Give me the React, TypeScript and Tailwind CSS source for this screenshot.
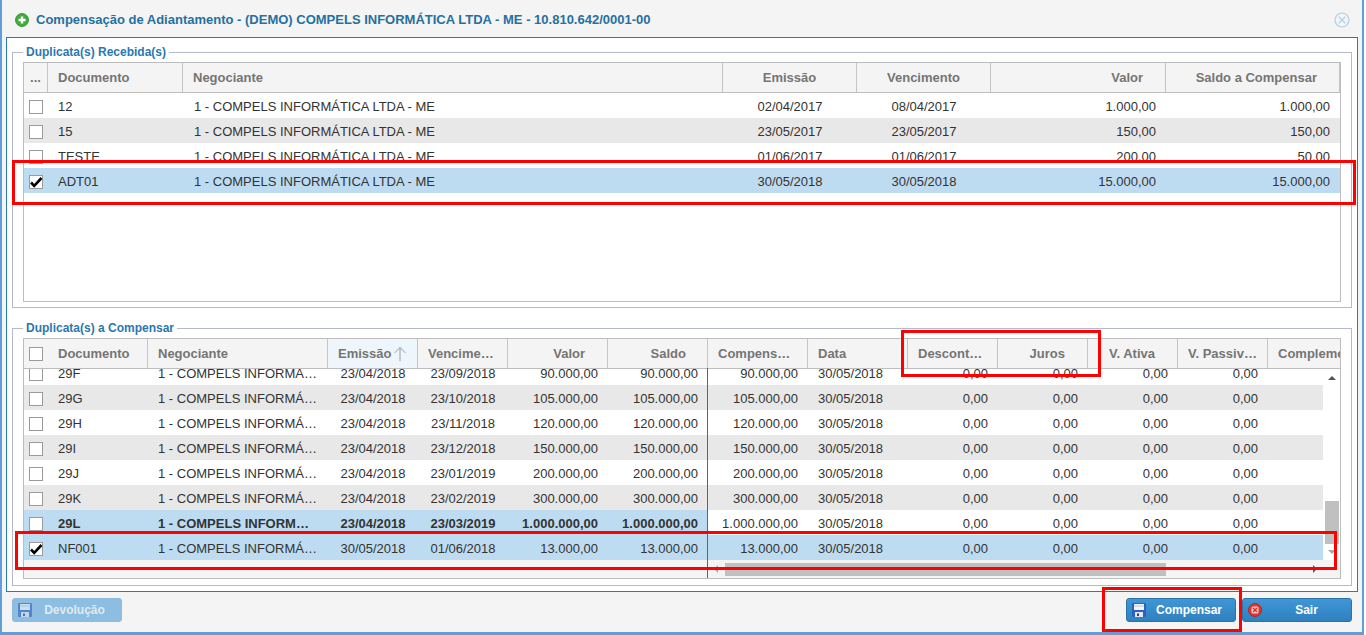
const F = "font-['Liberation_Sans',Arial,sans-serif]";

function Check({ on = false }: { on?: boolean }) {
  return (
    <span className="relative block h-[14px] w-[14px] shrink-0 border border-[#9a9a9a] bg-white">
      {on && (
        <svg viewBox="0 0 14 14" className="absolute -left-px -top-px h-[14px] w-[14px]">
          <path d="M2 7.5 L5.2 10.8 L12.5 3" fill="none" stroke="#000" strokeWidth="2.6" />
        </svg>
      )}
    </span>
  );
}

type Col = { w: string; label: string; head: string; cell: string };

const topCols: Col[] = [
  { w: "w-[135px]", label: "Documento", head: "justify-start pl-[10px]", cell: "justify-start pl-[10px]" },
  { w: "w-[540px]", label: "Negociante", head: "justify-start pl-[10px]", cell: "justify-start pl-[11px]" },
  { w: "w-[134px]", label: "Emissão", head: "justify-center", cell: "justify-center" },
  { w: "w-[134px]", label: "Vencimento", head: "justify-center", cell: "justify-center" },
  { w: "w-[175px]", label: "Valor", head: "justify-end pr-[22px]", cell: "justify-end pr-[10px]" },
  { w: "w-[174px]", label: "Saldo a Compensar", head: "justify-end pr-[22px]", cell: "justify-end pr-[10px]" },
];

const leftCols: Col[] = [
  { w: "w-[100px]", label: "Documento", head: "justify-start pl-[10px]", cell: "justify-start pl-[10px]" },
  { w: "w-[180px]", label: "Negociante", head: "justify-start pl-[10px]", cell: "justify-start pl-[10px]" },
  { w: "w-[90px]", label: "Emissão", head: "justify-start pl-[10px] bg-[#eef5fb]", cell: "justify-center" },
  { w: "w-[90px]", label: "Vencime…", head: "justify-start pl-[10px]", cell: "justify-center" },
  { w: "w-[100px]", label: "Valor", head: "justify-end pr-[22px]", cell: "justify-end pr-[10px]" },
  { w: "w-[100px]", label: "Saldo", head: "justify-end pr-[21px]", cell: "justify-end pr-[10px]" },
];

const rightCols: Col[] = [
  { w: "w-[100px]", label: "Compens…", head: "justify-start pl-[10px]", cell: "justify-end pr-[10px]" },
  { w: "w-[100px]", label: "Data", head: "justify-start pl-[10px]", cell: "justify-start pl-[10px]" },
  { w: "w-[90px]", label: "Descont…", head: "justify-start pl-[10px]", cell: "justify-end pr-[10px]" },
  { w: "w-[90px]", label: "Juros", head: "justify-end pr-[22px]", cell: "justify-end pr-[10px]" },
  { w: "w-[90px]", label: "V. Ativa", head: "justify-end pr-[22px]", cell: "justify-end pr-[10px]" },
  { w: "w-[90px]", label: "V. Passiv…", head: "justify-start pl-[10px]", cell: "justify-end pr-[10px]" },
  { w: "w-[90px]", label: "Complemento", head: "justify-start pl-[10px]", cell: "justify-end pr-[10px]" },
];

function Header({ cols, first, arrowAt }: { cols: Col[]; first?: React.ReactNode; arrowAt?: number }) {
  return (
    <div className="flex h-[30px] shrink-0 border-b border-[#bdbdbd] bg-[#f4f4f4]">
      {first}
      {cols.map((c, i) => (
        <div
          key={i}
          className={`flex ${c.w} shrink-0 items-center overflow-hidden whitespace-nowrap border-r border-[#c4c4c4] text-[13px] font-bold text-[#757575] ${c.head}`}
        >
          {c.label}
          {arrowAt === i && (
            <svg viewBox="0 0 14 16" className="ml-[2px] h-[16px] w-[14px]">
              <path d="M7 15V1.5M1.5 7 7 1.5 12.5 7" fill="none" stroke="#8aa0b4" strokeWidth="1" />
            </svg>
          )}
        </div>
      ))}
    </div>
  );
}

function Row({
  cols,
  vals,
  bg,
  bold,
  check,
  on,
}: {
  cols: Col[];
  vals: string[];
  bg: string;
  bold?: boolean;
  check?: boolean;
  on?: boolean;
}) {
  return (
    <div className={`flex h-[25px] shrink-0 pt-[2px] text-[13px] text-[#333] ${bg} ${bold ? "font-bold text-[#222]" : ""}`}>
      {check && (
        <div className="flex w-[24px] shrink-0 items-center pl-[5px]">
          <Check on={on} />
        </div>
      )}
      {vals.map((v, i) => (
        <div key={i} className={`flex ${cols[i].w} shrink-0 items-center overflow-hidden whitespace-nowrap ${cols[i].cell}`}>
          {v}
        </div>
      ))}
    </div>
  );
}

const NEG = "1 - COMPELS INFORMÁTICA LTDA - ME";
const W = "bg-white";
const G = "bg-[#e8e8e8]";
const S = "bg-[#bedcf1]";

const topRows = [
  { v: ["12", NEG, "02/04/2017", "08/04/2017", "1.000,00", "1.000,00"], bg: W },
  { v: ["15", NEG, "23/05/2017", "23/05/2017", "150,00", "150,00"], bg: G },
  { v: ["TESTE", NEG, "01/06/2017", "01/06/2017", "200,00", "50,00"], bg: W },
  { v: ["ADT01", NEG, "30/05/2018", "30/05/2018", "15.000,00", "15.000,00"], bg: S, on: true },
];

const N2 = "1 - COMPELS INFORMÁ…";
const botRows = [
  { d: "29F", e: "23/04/2018", f: "23/09/2018", val: "90.000,00" },
  { d: "29G", e: "23/04/2018", f: "23/10/2018", val: "105.000,00" },
  { d: "29H", e: "23/04/2018", f: "23/11/2018", val: "120.000,00" },
  { d: "29I", e: "23/04/2018", f: "23/12/2018", val: "150.000,00" },
  { d: "29J", e: "23/04/2018", f: "23/01/2019", val: "200.000,00" },
  { d: "29K", e: "23/04/2018", f: "23/02/2019", val: "300.000,00" },
  { d: "29L", e: "23/04/2018", f: "23/03/2019", val: "1.000.000,00" },
  { d: "NF001", e: "30/05/2018", f: "01/06/2018", val: "13.000,00" },
];

function Floppy({ dim }: { dim?: boolean }) {
  return (
    <svg viewBox="0 0 14 14" className={`h-[14px] w-[14px] shrink-0 ${dim ? "opacity-60" : ""}`}>
      <rect x="0" y="0" width="14" height="14" rx="1" fill="#2b62c0" />
      <rect x="2" y="1" width="10" height="6" fill="#f2f4f8" />
      <rect x="2" y="2.5" width="10" height="1" fill="#b9c6dc" />
      <rect x="3" y="9" width="8" height="5" fill="#e4e7ec" />
      <rect x="5" y="10.5" width="2" height="2.5" fill="#27477e" />
    </svg>
  );
}

function Legend({ children }: { children: React.ReactNode }) {
  return <legend className="h-[14px] px-[3px] text-[12px] font-bold leading-[14px] text-[#2a78b0]">{children}</legend>;
}

export default function App() {
  return (
    <div className={`${F} flex h-[635px] w-[1366px] overflow-hidden bg-white`}>
      <div className="flex h-[635px] w-[1364px] flex-col border-x-2 border-b-[3px] border-[#5f9ed8] bg-[#f4f4f4]">
        <div className="flex h-[37px] shrink-0 items-center pl-[13px] pr-[12px] pt-[2px]">
          <svg viewBox="0 0 14 14" className="h-[14px] w-[14px] shrink-0">
            <circle cx="7" cy="7" r="6.5" fill="#3fae3a" stroke="#2a8a2a" strokeWidth="0.8" />
            <path d="M7 3.5v7M3.5 7h7" stroke="#fff" strokeWidth="2.4" />
          </svg>
          <span className="ml-[7px] flex-1 text-[13px] font-bold text-[#26709f]">
            Compensação de Adiantamento - (DEMO) COMPELS INFORMÁTICA LTDA - ME - 10.810.642/0001-00
          </span>
          <svg viewBox="0 0 16 16" className="h-[16px] w-[16px] shrink-0">
            <circle cx="8" cy="8" r="7" fill="none" stroke="#a9cdea" strokeWidth="1.2" />
            <path d="M4.7 4.7l6.6 6.6M11.3 4.7l-6.6 6.6" stroke="#a9cdea" strokeWidth="1.2" />
          </svg>
        </div>

        <div className="mx-[4px] h-[555px] shrink-0 border border-[#2a7ab8] bg-white px-[5px] pt-[7px]">
          <fieldset className="h-[263px] min-w-0 border border-[#b4b9cb] px-[10px]">
            <Legend>Duplicata(s) Recebida(s)</Legend>
            <div className="mt-[3px] flex h-[240px] flex-col border border-[#bdbdbd] bg-white">
              <Header
                cols={topCols}
                first={
                  <div className="flex w-[24px] shrink-0 items-center justify-center border-r border-[#c4c4c4] text-[13px] font-bold text-[#757575]">
                    ...
                  </div>
                }
              />
              {topRows.map((r, i) => (
                <Row key={i} cols={topCols} vals={r.v} bg={r.bg} check on={r.on} />
              ))}
            </div>
          </fieldset>

          <fieldset className="mt-[13px] h-[265px] min-w-0 border border-[#b4b9cb] px-[10px]">
            <Legend>Duplicata(s) a Compensar</Legend>
            <div className="mt-[3px] flex h-[241px] border border-[#bdbdbd] bg-[#f4f4f4]">
              <div className="flex w-[684px] shrink-0 flex-col border-r border-[#2a72a8]">
                <Header
                  cols={leftCols}
                  arrowAt={2}
                  first={
                    <div className="flex w-[24px] shrink-0 items-center pl-[5px]">
                      <Check />
                    </div>
                  }
                />
                <div className="h-[192px] overflow-hidden">
                  <div className="-mt-[9px]">
                    {botRows.map((r, i) => (
                      <Row
                        key={i}
                        cols={leftCols}
                        vals={[r.d, r.d === "29L" ? "1 - COMPELS INFORM…" : N2, r.e, r.f, r.val, r.val]}
                        bg={i >= 6 ? S : i % 2 ? G : W}
                        bold={r.d === "29L"}
                        check
                        on={r.d === "NF001"}
                      />
                    ))}
                  </div>
                </div>
              </div>
              <div className="flex min-w-0 flex-1 flex-col overflow-hidden">
                <Header cols={rightCols} />
                <div className="flex h-[192px] overflow-hidden">
                  <div className="w-[615px] shrink-0">
                    <div className="-mt-[9px]">
                      {botRows.map((r, i) => (
                        <Row
                          key={i}
                          cols={rightCols}
                          vals={[r.val, "30/05/2018", "0,00", "0,00", "0,00", "0,00"]}
                          bg={r.d === "NF001" ? S : i % 2 ? G : W}
                        />
                      ))}
                    </div>
                  </div>
                  <div className="flex w-[17px] shrink-0 flex-col items-center bg-white">
                    <div className="mt-[7px] h-0 w-0 border-x-[4px] border-b-[4px] border-x-transparent border-b-[#555]" />
                    <div className="mt-[121px] h-[43px] w-[14px] bg-[#c0c0c0]" />
                    <div className="mt-[6px] h-0 w-0 border-x-[4px] border-t-[4px] border-x-transparent border-t-[#a8a8a8]" />
                  </div>
                </div>
                <div className="flex h-[18px] w-[615px] shrink-0 items-center">
                  <div className="ml-[6px] h-0 w-0 border-y-[4px] border-r-[4px] border-y-transparent border-r-[#a8a8a8]" />
                  <div className="ml-[7px] h-[13px] w-[441px] bg-[#c0c0c0]" />
                  <div className="ml-[147px] h-0 w-0 border-y-[4px] border-l-[4px] border-y-transparent border-l-[#555]" />
                </div>
              </div>
            </div>
          </fieldset>
        </div>

        <div className="flex flex-1 items-start justify-between px-[10px] pt-[6px]">
          <button className="flex h-[24px] w-[110px] items-center rounded-[3px] border border-[#8dbbdc] bg-[#8dbde0] pl-[5px] text-[12px] font-bold text-[#deebf5]">
            <Floppy dim />
            <span className="flex-1 pr-[4px] text-center">Devolução</span>
          </button>
          <div className="flex gap-[6px]">
            <button className="flex h-[24px] w-[110px] items-center rounded-[3px] border border-[#2a72a8] bg-gradient-to-b from-[#4097d6] to-[#2f80bf] pl-[5px] text-[12px] font-bold text-white">
              <Floppy />
              <span className="flex-1 pr-[3px] text-center">Compensar</span>
            </button>
            <button className="flex h-[24px] w-[110px] items-center rounded-[3px] border border-[#2a72a8] bg-gradient-to-b from-[#4097d6] to-[#2f80bf] pl-[5px] text-[12px] font-bold text-white">
              <svg viewBox="0 0 14 14" className="h-[14px] w-[14px] shrink-0">
                <circle cx="7" cy="7" r="6.5" fill="#e2352f" stroke="#a81f1f" strokeWidth="0.8" />
                <rect x="3.5" y="3.5" width="7" height="7" rx="1.5" fill="#f6c9c6" />
                <path d="M5 5l4 4M9 5l-4 4" stroke="#d6302a" strokeWidth="1.4" />
              </svg>
              <span className="flex-1 text-center">Sair</span>
            </button>
          </div>
        </div>
      </div>

      {/* red annotation boxes drawn over the screenshot */}
      <div className="pointer-events-none absolute left-[12px] top-[160px] h-[45px] w-[1344px] border-[3px] border-[#f00]" />
      <div className="pointer-events-none absolute left-[901px] top-[330px] h-[47px] w-[200px] border-[3px] border-[#f00]" />
      <div className="pointer-events-none absolute left-[15px] top-[531px] h-[39px] w-[1322px] border-[3px] border-[#f00]" />
      <div className="pointer-events-none absolute left-[1102px] top-[587px] h-[45px] w-[140px] border-[3px] border-[#f00]" />
    </div>
  );
}
